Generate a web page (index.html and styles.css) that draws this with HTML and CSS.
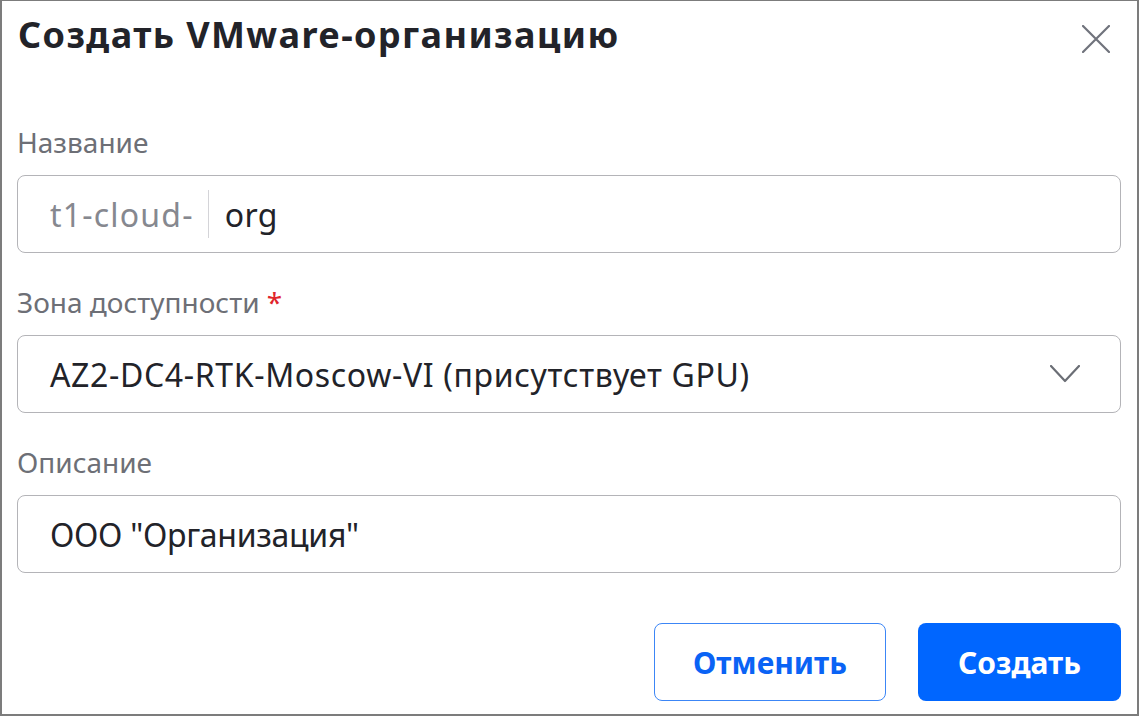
FILE: index.html
```html
<!DOCTYPE html>
<html lang="ru">
<head>
<meta charset="utf-8">
<link rel="stylesheet" href="styles.css">
</head>
<body>
<div class="dialog">
  <div class="header">
    <h1 class="title">Создать VMware-организацию</h1>
    <button class="close" aria-label="Закрыть">
      <svg width="28" height="28" viewBox="0 0 28 28"><path d="M1 1 L27 27 M27 1 L1 27" stroke="#70737c" stroke-width="2.2" stroke-linecap="round" fill="none"/></svg>
    </button>
  </div>
  <div class="field">
    <div class="label">Название</div>
    <div class="input">
      <span class="prefix">t1-cloud-</span>
      <span class="sep"></span>
      <span class="value">org</span>
    </div>
  </div>
  <div class="field">
    <div class="label">Зона доступности <span class="req">*</span></div>
    <div class="input select">
      <span class="value value-wide">AZ2-DC4-RTK-Moscow-VI (присутствует GPU)</span>
      <svg class="chev" width="30" height="18" viewBox="0 0 30 18"><path d="M1 1 L15 16 L29 1" stroke="#6b6e75" stroke-width="2.2" stroke-linecap="round" stroke-linejoin="round" fill="none"/></svg>
    </div>
  </div>
  <div class="field">
    <div class="label">Описание</div>
    <div class="input">
      <span class="value value-tight">ООО "Организация"</span>
    </div>
  </div>
  <div class="actions">
    <button class="btn btn-secondary">Отменить</button>
    <button class="btn btn-primary">Создать</button>
  </div>
</div>
</body>
</html>
```
FILE: styles.css
```css
* { box-sizing: border-box; }
html, body { margin: 0; padding: 0; background: #fff; }
body { font-family: "Noto Sans", "Open Sans", sans-serif; color: #222329; }

.dialog {
  width: 1139px;
  height: 716px;
  border-style: solid;
  border-color: #7c7c7c;
  border-width: 1px 2px 2px 2px;
  padding: 10px 16px 0 15px;
  display: flex;
  flex-direction: column;
}

.header {
  display: flex;
  align-items: center;
  justify-content: space-between;
  height: 48px;
  margin-bottom: 65px;
}
.title {
  margin: 0 0 0 1px;
  font-size: 36px;
  font-weight: 700;
  line-height: 48px;
  letter-spacing: 1.4px;
  color: #222329;
}
.close {
  border: 0;
  background: none;
  padding: 0;
  width: 28px;
  height: 28px;
  margin-right: 11px;
  margin-top: 8px;
  display: flex;
}

.field { display: flex; flex-direction: column; margin-bottom: 31px; }
.label {
  font-size: 28px;
  line-height: 36px;
  color: #6d6f76;
  margin-bottom: 15px;
}
.req { color: #e0252a; }

.input {
  height: 78px;
  border: 1px solid #b4b4b8;
  border-radius: 8px;
  display: flex;
  align-items: center;
  padding: 0 40px 0 32px;
  font-size: 32px;
  letter-spacing: 0.4px;
  color: #222329;
}
.value-wide { letter-spacing: 0.65px; }
.value-tight { letter-spacing: -0.3px; }
.prefix { color: #86888f; letter-spacing: 1.2px; }
.sep {
  width: 1px;
  height: 48px;
  background: #d4d4d8;
  margin: 0 16px 0 14px;
}
.select { justify-content: space-between; }

.actions {
  margin-top: 19px;
  display: flex;
  justify-content: flex-end;
  gap: 32px;
}
.btn {
  height: 78px;
  border-radius: 8px;
  font-family: "Noto Sans", sans-serif;
  font-size: 30px;
  font-weight: 700;
  padding: 0;
}
.btn-secondary {
  background: #fff;
  color: #0a63f5;
  border: 1px solid #3c86f6;
  width: 232px;
}
.btn-primary {
  background: #0066ff;
  color: #fff;
  border: 0;
  width: 203px;
}
```
